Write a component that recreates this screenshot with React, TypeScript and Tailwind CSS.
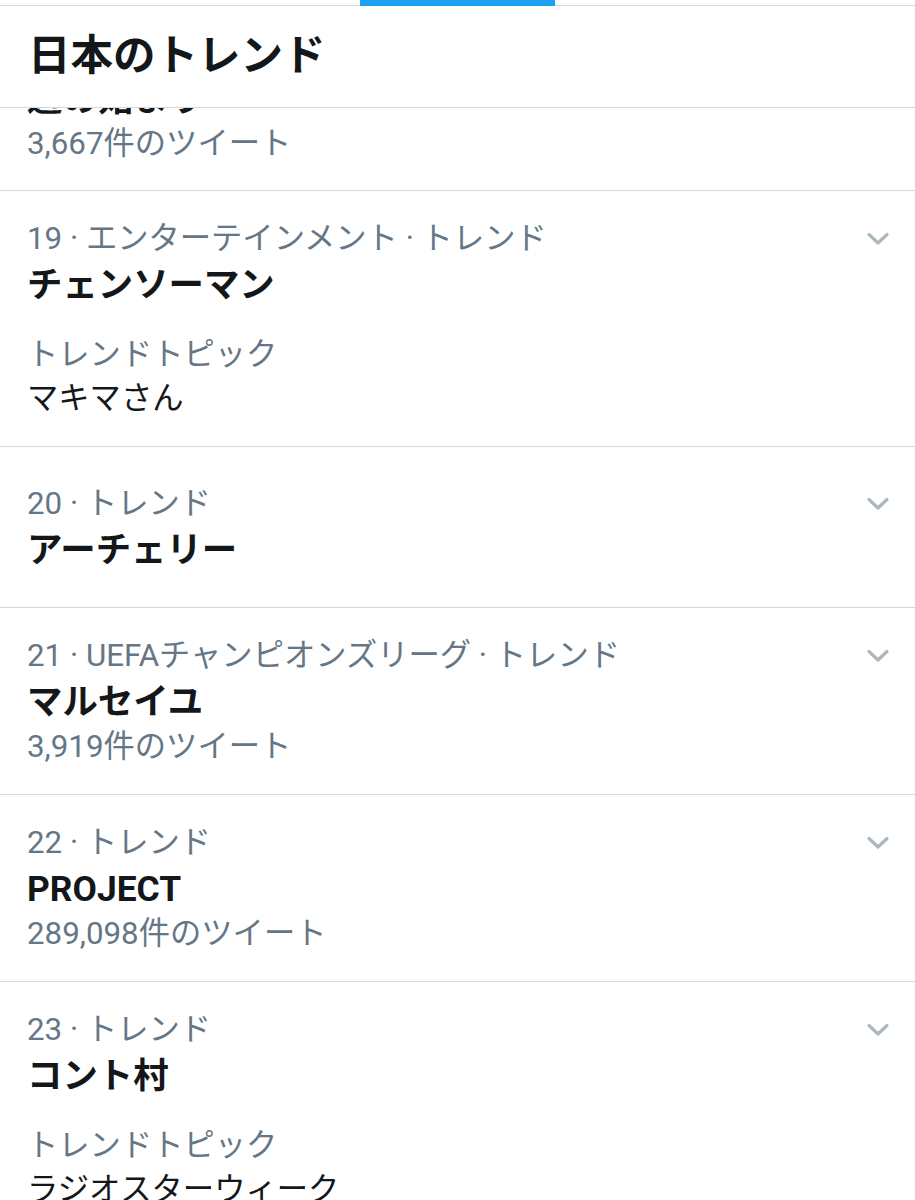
import React from "react";

function Chevron() {
  return (
    <svg width="24" height="14" viewBox="0 0 24 14" fill="none" className="shrink-0">
      <polyline
        points="3,2.5 12,11 21,2.5"
        stroke="#aab8c2"
        strokeWidth="3.2"
        strokeLinecap="round"
        strokeLinejoin="round"
      />
    </svg>
  );
}

type Item = {
  meta: string;
  title: string;
  count?: string;
  topic?: string;
};

function TrendItem({ item, minH }: { item: Item; minH?: boolean }) {
  return (
    <div
      className={
        minH
          ? "flex min-h-[161px] flex-col justify-center border-b border-[#d0d9df] pl-[27px] pr-[25px]"
          : "flex flex-col border-b border-[#d0d9df] pl-[27px] pr-[25px] pt-[25px] pb-[25px]"
      }
    >
      <div className="flex h-[46px] items-center justify-between">
        <span className="text-[31.3px] leading-[46px] text-[#657786]">{item.meta}</span>
        <Chevron />
      </div>
      <div className="text-[35.4px] font-bold leading-[46px] text-[#14171a]">{item.title}</div>
      {item.count && (
        <div className="text-[31.3px] leading-[44px] text-[#657786]">{item.count}</div>
      )}
      {item.topic && (
        <div className="mt-[25px] flex flex-col">
          <div className="text-[31.3px] leading-[44px] text-[#657786]">トレンドトピック</div>
          <div className="text-[31.3px] leading-[44px] text-[#14171a]">{item.topic}</div>
        </div>
      )}
    </div>
  );
}

export default function App() {
  const items: Item[] = [
    { meta: "19 · エンターテインメント · トレンド", title: "チェンソーマン", topic: "マキマさん" },
    { meta: "20 · トレンド", title: "アーチェリー" },
    { meta: "21 · UEFAチャンピオンズリーグ · トレンド", title: "マルセイユ", count: "3,919件のツイート" },
    { meta: "22 · トレンド", title: "PROJECT", count: "289,098件のツイート" },
    { meta: "23 · トレンド", title: "コント村", topic: "ラジオスターウィーク" },
  ];

  return (
    <div className="flex h-[1200px] w-[915px] flex-col overflow-hidden bg-white font-[Roboto,'Noto_Sans_CJK_JP',sans-serif]">
      {/* tab strip remnant */}
      <div className="h-[6px] shrink-0 border-b border-[#d0d9df]">
        <div className="ml-[360px] h-[6px] w-[195px] bg-[#1da1f2]" />
      </div>
      {/* header */}
      <div className="relative z-10 flex h-[102px] shrink-0 items-center border-b border-[#d0d9df] bg-white pl-[28px]">
        <h1 className="text-[42.5px] font-bold leading-none text-[#14171a]">日本のトレンド</h1>
      </div>
      {/* list */}
      <div className="flex flex-col">
        <div className="-mt-[32px] flex flex-col border-b border-[#d0d9df] pl-[27px] pr-[25px] pb-[24px]">
          <div className="text-[35.4px] font-bold leading-[46px] text-[#14171a]">週の始まり</div>
          <div className="text-[31.3px] leading-[44px] text-[#657786]">3,667件のツイート</div>
        </div>
        {items.map((it, i) => (
          <TrendItem key={i} item={it} minH={i === 1} />
        ))}
      </div>
    </div>
  );
}
